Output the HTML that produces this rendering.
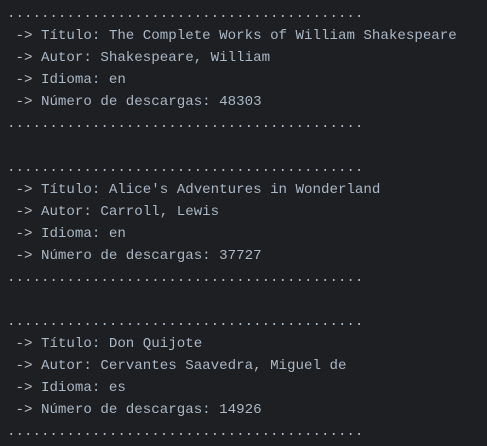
<!DOCTYPE html>
<html><head><meta charset="utf-8"><style>
html,body{margin:0;padding:0;background:#1e1f22;width:487px;height:446px;overflow:hidden}
pre{margin:0;padding:3px 0 0 7px;font-family:"Liberation Mono",monospace;font-size:14.15px;line-height:22px;color:#a9b7c6}
.a{color:#bcbec4}
</style></head><body><pre>..........................................
<span class="a"> -></span> Título: The Complete Works of William Shakespeare
<span class="a"> -></span> Autor: Shakespeare, William
<span class="a"> -></span> Idioma: en
<span class="a"> -></span> Número de descargas: 48303
..........................................

..........................................
<span class="a"> -></span> Título: Alice's Adventures in Wonderland
<span class="a"> -></span> Autor: Carroll, Lewis
<span class="a"> -></span> Idioma: en
<span class="a"> -></span> Número de descargas: 37727
..........................................

..........................................
<span class="a"> -></span> Título: Don Quijote
<span class="a"> -></span> Autor: Cervantes Saavedra, Miguel de
<span class="a"> -></span> Idioma: es
<span class="a"> -></span> Número de descargas: 14926
..........................................</pre></body></html>
